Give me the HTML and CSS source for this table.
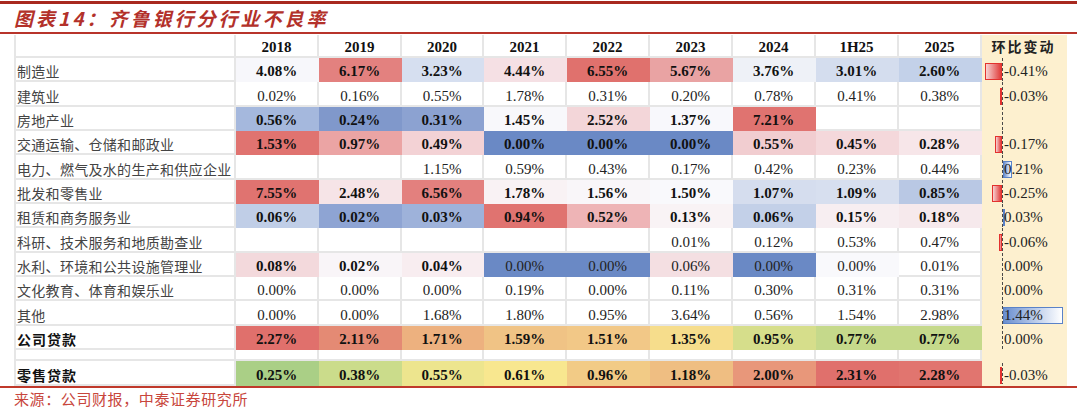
FILE: index.html
```html
<!DOCTYPE html>
<html lang="zh-CN">
<head>
<meta charset="utf-8">
<title>齐鲁银行分行业不良率</title>
<link rel="stylesheet" href="styles.css">
</head>
<body>
<div class="page">
  <div class="topline"></div>
  <h1 class="title">图表14：齐鲁银行分行业不良率</h1>
  <div class="wrap">
    <table class="grid">
      <colgroup>
        <col class="c-lbl"><col class="c-d"><col class="c-d"><col class="c-d2"><col class="c-d"><col class="c-d"><col class="c-d"><col class="c-d"><col class="c-d"><col class="c-d"><col class="c-chg">
      </colgroup>
      <thead>
        <tr class="hd">
          <th class="lbl"></th>
          <th>2018</th><th>2019</th><th>2020</th><th>2021</th><th>2022</th><th>2023</th><th>2024</th><th>1H25</th><th>2025</th>
          <th class="chg hchg">环比变动</th>
        </tr>
      </thead>
      <tbody>
        <tr class="r b">
          <td class="lbl">制造业</td>
          <td class="f" style="background:#f7f7fb">4.08%</td>
          <td class="f" style="background:#e3817f">6.17%</td>
          <td class="f" style="background:#d6dff0">3.23%</td>
          <td class="f" style="background:#f5e0e4">4.44%</td>
          <td class="f" style="background:#e0716d">6.55%</td>
          <td class="f" style="background:#e9a3a3">5.67%</td>
          <td class="f" style="background:#eef1f7">3.76%</td>
          <td class="f" style="background:#d4ddee">3.01%</td>
          <td class="f" style="background:#c3d1e9">2.60%</td>
          <td class="chg ax"><div class="cv"><div class="neg"><i class="bar bn" style="width:17px"></i></div><div class="pos"><span class="val">-0.41%</span></div></div></td>
        </tr>
        <tr class="r">
          <td class="lbl">建筑业</td>
          <td>0.02%</td><td>0.16%</td><td>0.55%</td><td>1.78%</td><td>0.31%</td><td>0.20%</td><td>0.78%</td><td>0.41%</td><td>0.38%</td>
          <td class="chg ax"><div class="cv"><div class="neg"><i class="bar bn" style="width:2px"></i></div><div class="pos"><span class="val">-0.03%</span></div></div></td>
        </tr>
        <tr class="r b">
          <td class="lbl">房地产业</td>
          <td class="f" style="background:#a5b8dd">0.56%</td>
          <td class="f" style="background:#8098cb">0.24%</td>
          <td class="f" style="background:#8ca2d1">0.31%</td>
          <td class="f" style="background:#f8f8fb">1.45%</td>
          <td class="f" style="background:#f3d6d9">2.52%</td>
          <td class="f" style="background:#f8f8fc">1.37%</td>
          <td class="f" style="background:#e07370">7.21%</td>
          <td></td><td></td>
          <td class="chg ax"></td>
        </tr>
        <tr class="r b">
          <td class="lbl">交通运输、仓储和邮政业</td>
          <td class="f" style="background:#e07370">1.53%</td>
          <td class="f" style="background:#eba4a4">0.97%</td>
          <td class="f" style="background:#f3d2d5">0.49%</td>
          <td class="f" style="background:#6a89c5">0.00%</td>
          <td class="f" style="background:#6a89c5">0.00%</td>
          <td class="f" style="background:#6a89c5">0.00%</td>
          <td class="f" style="background:#f1cdd0">0.55%</td>
          <td class="f" style="background:#f4d8db">0.45%</td>
          <td class="f" style="background:#f7e6e9">0.28%</td>
          <td class="chg ax"><div class="cv"><div class="neg"><i class="bar bn" style="width:7px"></i></div><div class="pos"><span class="val">-0.17%</span></div></div></td>
        </tr>
        <tr class="r">
          <td class="lbl">电力、燃气及水的生产和供应企业</td>
          <td></td><td></td><td>1.15%</td><td>0.59%</td><td>0.43%</td><td>0.17%</td><td>0.42%</td><td>0.23%</td><td>0.44%</td>
          <td class="chg ax"><div class="cv"><div class="neg"></div><div class="pos"><i class="bar bp" style="width:9px"></i><span class="val">0.21%</span></div></div></td>
        </tr>
        <tr class="r b">
          <td class="lbl">批发和零售业</td>
          <td class="f" style="background:#e07370">7.55%</td>
          <td class="f" style="background:#f6e4e7">2.48%</td>
          <td class="f" style="background:#e3807e">6.56%</td>
          <td class="f" style="background:#f9f2f4">1.78%</td>
          <td class="f" style="background:#f9f6f9">1.56%</td>
          <td class="f" style="background:#f9f9fc">1.50%</td>
          <td class="f" style="background:#d5ddee">1.07%</td>
          <td class="f" style="background:#d7dfef">1.09%</td>
          <td class="f" style="background:#b9c8e4">0.85%</td>
          <td class="chg ax"><div class="cv"><div class="neg"><i class="bar bn" style="width:10px"></i></div><div class="pos"><span class="val">-0.25%</span></div></div></td>
        </tr>
        <tr class="r b">
          <td class="lbl">租赁和商务服务业</td>
          <td class="f" style="background:#c0cee7">0.06%</td>
          <td class="f" style="background:#8ea4d3">0.02%</td>
          <td class="f" style="background:#9eb2da">0.03%</td>
          <td class="f" style="background:#e07370">0.94%</td>
          <td class="f" style="background:#eeb4b6">0.52%</td>
          <td class="f" style="background:#f9f3f5">0.13%</td>
          <td class="f" style="background:#c3d0e8">0.06%</td>
          <td class="f" style="background:#f7eef1">0.15%</td>
          <td class="f" style="background:#f6e9ec">0.18%</td>
          <td class="chg ax"><div class="cv"><div class="neg"></div><div class="pos"><i class="bar bp" style="width:2px"></i><span class="val">0.03%</span></div></div></td>
        </tr>
        <tr class="r">
          <td class="lbl">科研、技术服务和地质勘查业</td>
          <td></td><td></td><td></td><td></td><td></td><td>0.01%</td><td>0.12%</td><td>0.53%</td><td>0.47%</td>
          <td class="chg ax"><div class="cv"><div class="neg"><i class="bar bn" style="width:3px"></i></div><div class="pos"><span class="val">-0.06%</span></div></div></td>
        </tr>
        <tr class="r">
          <td class="lbl">水利、环境和公共设施管理业</td>
          <td class="f bb" style="background:#f3d9dc">0.08%</td>
          <td class="f bb" style="background:#f9f5f8">0.02%</td>
          <td class="f bb" style="background:#f8edf0">0.04%</td>
          <td class="f" style="background:#6a89c5">0.00%</td>
          <td class="f" style="background:#6a89c5">0.00%</td>
          <td class="f" style="background:#f4dfe2">0.06%</td>
          <td class="f" style="background:#6a89c5">0.00%</td>
          <td class="f" style="background:#f9f9fc">0.00%</td>
          <td>0.01%</td>
          <td class="chg ax"><div class="cv"><div class="neg"></div><div class="pos"><span class="val">0.00%</span></div></div></td>
        </tr>
        <tr class="r">
          <td class="lbl">文化教育、体育和娱乐业</td>
          <td>0.00%</td><td>0.00%</td><td>0.00%</td><td>0.19%</td><td>0.00%</td><td>0.11%</td><td>0.30%</td><td>0.31%</td><td>0.31%</td>
          <td class="chg ax"><div class="cv"><div class="neg"></div><div class="pos"><span class="val">0.00%</span></div></div></td>
        </tr>
        <tr class="r">
          <td class="lbl">其他</td>
          <td>0.00%</td><td>0.00%</td><td>1.68%</td><td>1.80%</td><td>0.95%</td><td>3.64%</td><td>0.56%</td><td>1.54%</td><td>2.98%</td>
          <td class="chg ax"><div class="cv"><div class="neg"></div><div class="pos"><i class="bar bp" style="width:60px"></i><span class="val">1.44%</span></div></div></td>
        </tr>
        <tr class="r b">
          <td class="lbl tot">公司贷款</td>
          <td class="f" style="background:#e0706c">2.27%</td>
          <td class="f" style="background:#e48a74">2.11%</td>
          <td class="f" style="background:#edb17f">1.71%</td>
          <td class="f" style="background:#f0c385">1.59%</td>
          <td class="f" style="background:#f2c887">1.51%</td>
          <td class="f" style="background:#f6dd8c">1.35%</td>
          <td class="f" style="background:#d6de8b">0.95%</td>
          <td class="f" style="background:#c5d98b">0.77%</td>
          <td class="f" style="background:#c5d98b">0.77%</td>
          <td class="chg ax"><div class="cv"><div class="neg"></div><div class="pos"><span class="val">0.00%</span></div></div></td>
        </tr>
        <tr class="gap">
          <td class="lbl"></td>
          <td></td><td></td><td></td><td></td><td></td><td></td><td></td><td></td><td></td>
          <td class="chg"></td>
        </tr>
        <tr class="r last b">
          <td class="lbl tot">零售贷款</td>
          <td class="f" style="background:#aacf86">0.25%</td>
          <td class="f" style="background:#cbdc8b">0.38%</td>
          <td class="f" style="background:#ede58e">0.55%</td>
          <td class="f" style="background:#f8e78f">0.61%</td>
          <td class="f" style="background:#f2cb86">0.96%</td>
          <td class="f" style="background:#efbe82">1.18%</td>
          <td class="f" style="background:#e8977a">2.00%</td>
          <td class="f" style="background:#e0706c">2.31%</td>
          <td class="f" style="background:#e1756f">2.28%</td>
          <td class="chg ax ax-short"><div class="cv"><div class="neg"><i class="bar bn" style="width:2px"></i></div><div class="pos"><span class="val">-0.03%</span></div></div></td>
        </tr>
      </tbody>
    </table>
  </div>
  <div class="src">来源：公司财报，中泰证券研究所</div>
</div>
</body>
</html>
```

FILE: styles.css
```css
body {
  margin: 0;
  background: #ffffff;
}

.page {
  width: 1077px;
  padding-top: 1px;
}

.topline {
  height: 3px;
  background: #a8291f;
}

.title {
  margin: 0;
  height: 28px;
  line-height: 28px;
  padding-left: 14px;
  font-family: "Noto Sans CJK SC", sans-serif;
  font-size: 19px;
  font-weight: 700;
  font-style: italic;
  letter-spacing: 3px;
  color: #b3312a;
  border-bottom: 2px solid #b8342b;
}

.wrap {
  margin-top: 1px;
  padding-left: 14px;
}

.grid {
  border-collapse: separate;
  border-spacing: 0;
  table-layout: fixed;
  width: 1053px;
}

.c-lbl { width: 222px; }
.c-d { width: 83px; }
.c-d2 { width: 82px; }
.c-chg { width: 85px; }

.grid th,
.grid td {
  padding: 0;
  border-right: 2px solid #e6e6e6;
  border-bottom: 2px solid #e6e6e6;
  text-align: center;
  vertical-align: bottom;
  white-space: nowrap;
  overflow: hidden;
  font-family: "Liberation Serif", serif;
  font-size: 15px;
  line-height: 17px;
  color: #222222;
}

.grid th {
  font-weight: 700;
  color: #111111;
}

.hd { height: 23px; }
.r { height: 24.33px; }
.r.last { height: 25px; }
.gap { height: 11px; }

.r.b td,
.grid td.bb {
  font-weight: 700;
  color: #111111;
}

.grid td.f {
  border-color: transparent;
}

.grid .lbl {
  text-align: left;
  border-left: 2px solid #e6e6e6;
  padding-left: 1px;
  font-family: "Noto Sans CJK SC", sans-serif;
  font-size: 14px;
  line-height: 18px;
  font-weight: 400;
  letter-spacing: 0.3px;
  color: #444444;
}

.grid .r.b td.lbl {
  font-weight: 400;
  color: #444444;
}

.grid .r.b td.tot {
  font-weight: 700;
  color: #111111;
  letter-spacing: 1px;
}

.grid .chg {
  background-color: #fdf0cf;
  border-color: transparent;
  text-align: left;
  font-weight: 400;
}

.grid .r.b td.chg {
  font-weight: 400;
  color: #222222;
}

.grid th.hchg {
  text-align: center;
  font-family: "Noto Sans CJK SC", sans-serif;
  font-size: 14px;
  line-height: 20px;
  font-weight: 700;
  letter-spacing: 2px;
  color: #222222;
}

.ax {
  background-image: repeating-linear-gradient(to bottom, #4a4a4a 0, #4a4a4a 3px, transparent 3px, transparent 5px);
  background-repeat: no-repeat;
  background-origin: border-box;
  background-size: 1px 100%;
  background-position: 20px 0;
}

.ax-short {
  background-size: 1px 84%;
  background-position: 20px 50%;
}

.cv {
  display: grid;
  grid-template-columns: 20px 1fr;
  align-items: center;
  height: 17px;
}

.neg {
  display: flex;
  justify-content: flex-end;
  height: 17px;
}

.pos {
  display: grid;
  align-items: center;
  height: 17px;
  padding-left: 1px;
}

.pos > * {
  grid-area: 1 / 1;
}

.val {
  padding-left: 1px;
  line-height: 17px;
  text-align: left;
}

.bar {
  display: block;
  height: 17px;
  box-sizing: border-box;
}

.bn {
  border: 1px solid #e3312e;
  background: linear-gradient(to right, #f7d3d3, #e03b39);
}

.bp {
  justify-self: start;
  border: 1px solid #5a82c8;
  background: linear-gradient(to right, #6a8fd0, #ffffff);
}

.src {
  border-top: 2px solid #c0392b;
  padding-left: 14px;
  height: 21px;
  line-height: 21px;
  font-family: "Noto Sans CJK SC", sans-serif;
  font-size: 15px;
  letter-spacing: 0.6px;
  color: #c8463c;
}
```
